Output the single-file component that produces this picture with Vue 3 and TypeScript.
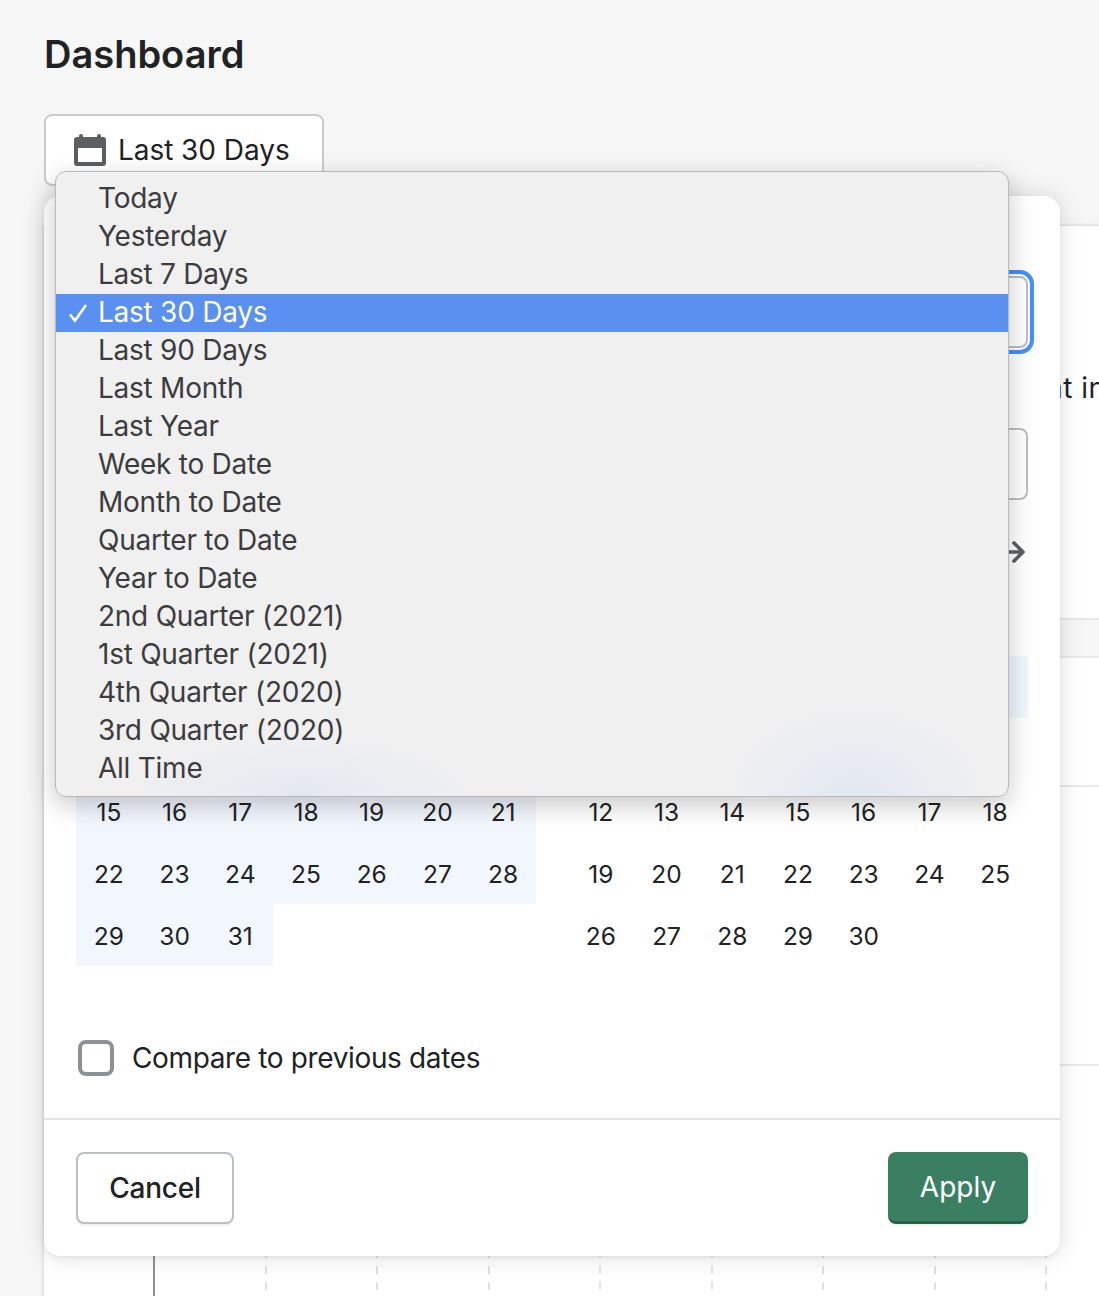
<script setup lang="ts">
const options: string[] = [
  'Today', 'Yesterday', 'Last 7 Days', 'Last 30 Days', 'Last 90 Days', 'Last Month', 'Last Year',
  'Week to Date', 'Month to Date', 'Quarter to Date', 'Year to Date', '2nd Quarter (2021)',
  '1st Quarter (2021)', '4th Quarter (2020)', '3rd Quarter (2020)', 'All Time',
]
const selected = 'Last 30 Days'
const weekdays = ['Su', 'Mo', 'Tu', 'We', 'Th', 'Fr', 'Sa']

interface Cell { day: number | null; on: boolean }
function month(offset: number, length: number, onUntil: number): Cell[] {
  const cells: Cell[] = []
  for (let i = 0; i < offset; i++) cells.push({ day: null, on: false })
  for (let d = 1; d <= length; d++) cells.push({ day: d, on: d <= onUntil })
  return cells
}
const months = [
  { name: 'august', cells: month(0, 31, 31) },
  { name: 'september', cells: month(3, 30, 4) },
]
const ticks = [1, 2, 3, 4, 5, 6, 7, 8]
</script>

<template>
  <div class="page">
    <h1 class="title">Dashboard</h1>

    <button class="range-btn" type="button">
      <svg class="cal" viewBox="0 0 32 32" aria-hidden="true">
        <path fill="#5c5f62" fill-rule="evenodd" d="M7 0a2 2 0 0 1 2 2v1h14V2a2 2 0 0 1 4 0v1h2a3 3 0 0 1 3 3v23a3 3 0 0 1-3 3H3a3 3 0 0 1-3-3V6a3 3 0 0 1 3-3h2V2a2 2 0 0 1 2-2zM4 14v14h24V14H4z" />
      </svg>
      <span>Last 30 Days</span>
    </button>

    <section class="report">
      <p class="report-text">at insights</p>
      <div class="report-band"></div>
      <div class="report-row"></div>
      <div class="report-row tall"></div>
      <div class="chart">
        <div v-for="t in ticks" :key="t" class="tick"></div>
      </div>
    </section>

    <div class="popover">
      <div class="pop-body">
        <label class="lbl">Date range</label>
        <div class="input focused"></div>
        <div class="date-fields">
          <div class="date-field"><label class="lbl">Starting</label><div class="input"></div></div>
          <div class="date-field"><label class="lbl">Ending</label><div class="input"></div></div>
        </div>
        <div class="nav">
          <svg class="arrow" viewBox="0 0 18 24" aria-hidden="true">
            <path d="M1 12h14M6 3l9 9-9 9" fill="none" stroke="#5c5f62" stroke-width="3.6" stroke-linecap="round" stroke-linejoin="round" />
          </svg>
        </div>
        <div class="months">
          <div v-for="m in months" :key="m.name" class="month">
            <div v-for="w in weekdays" :key="w" class="cell wd">{{ w }}</div>
            <div v-for="(c, i) in m.cells" :key="i" class="cell" :class="{ on: c.on }">{{ c.day }}</div>
          </div>
        </div>
        <label class="compare">
          <span class="box"></span>
          <span>Compare to previous dates</span>
        </label>
      </div>
      <footer class="pop-foot">
        <button class="btn" type="button">Cancel</button>
        <button class="btn primary" type="button">Apply</button>
      </footer>
    </div>

    <ul class="menu">
      <li v-for="o in options" :key="o" class="item" :class="{ sel: o === selected }">
        <span class="check">
          <svg v-if="o === selected" viewBox="0 0 20 20" aria-hidden="true">
            <path d="M2 11.5l5 6L18 2" fill="none" stroke="#fff" stroke-width="2.6" />
          </svg>
        </span>
        <span class="item-text">{{ o }}</span>
      </li>
    </ul>
  </div>
</template>

<style>
html, body { margin: 0; background: #f6f6f7; }
</style>

<style scoped>
.page {
  position: relative;
  width: 1099px;
  height: 1296px;
  overflow: hidden;
  box-sizing: border-box;
  padding: 0 0 0 44px;
  background: #f6f6f7;
  font-family: Inter, "Liberation Sans", sans-serif;
  color: #202223;
}
.title {
  margin: 0;
  padding: 31px 0 0;
  height: 114px;
  box-sizing: border-box;
  font-size: 38px;
  line-height: 46px;
  font-weight: 600;
}
.range-btn {
  display: flex;
  align-items: center;
  gap: 12px;
  box-sizing: border-box;
  width: 280px;
  height: 72px;
  padding: 0 0 0 28px;
  background: #fff;
  border: 2px solid #c9cccf;
  border-radius: 8px;
  font: inherit;
  font-size: 28px;
  letter-spacing: -0.05px;
  color: #202223;
}
.cal { width: 32px; height: 32px; flex: none; }

.report {
  margin-top: 40px;
  width: 1100px;
  height: 1080px;
  background: #fff;
  box-shadow: 0 0 4px rgba(23, 24, 24, .2);
}
.report-text {
  margin: 0;
  height: 392px;
  box-sizing: border-box;
  padding: 144px 0 0 1003px;
  font-size: 28px;
  line-height: 36px;
  letter-spacing: .5px;
  white-space: nowrap;
}
.report-band {
  height: 40px;
  box-sizing: border-box;
  background: #f6f6f7;
  border-top: 2px solid #e9e9ea;
  border-bottom: 2px solid #e9e9ea;
}
.report-row { height: 127px; border-bottom: 2px solid #e9e9ea; }
.report-row.tall { height: 277px; }
.chart {
  display: flex;
  margin-left: 109px;
  height: 240px;
  border-left: 2px solid #8c9196;
}
.tick {
  flex: none;
  width: 111.5px;
  box-sizing: border-box;
  background: repeating-linear-gradient(to bottom, #e1e3e5 0 8px, transparent 8px 16px) right 8px / 2px 100% no-repeat;
}

.popover {
  position: absolute;
  left: 44px;
  top: 196px;
  width: 1016px;
  height: 1060px;
  display: flex;
  flex-direction: column;
  background: #fff;
  border-radius: 16px;
  box-shadow: 0 0 24px rgba(23, 24, 24, .14), 0 2px 4px rgba(23, 24, 24, .06);
}
.pop-body {
  flex: 1;
  padding: 32px 32px 0;
  border-bottom: 2px solid #e1e3e5;
}
.lbl { display: block; height: 48px; font-size: 28px; line-height: 36px; }
.input {
  box-sizing: border-box;
  height: 72px;
  border: 2px solid #babfc3;
  border-radius: 8px;
}
.input.focused { outline: 4px solid #458fff; outline-offset: 2px; }
.date-fields { display: flex; gap: 32px; margin-top: 32px; }
.date-field { flex: 1; }
.nav { display: flex; justify-content: flex-end; align-items: center; height: 40px; margin-top: 32px; }
.arrow { width: 18px; height: 24px; margin-right: 2px; }
.months { display: flex; gap: 32px; margin-top: 22px; height: 372px; }
.month { flex: 1; display: grid; grid-template-columns: repeat(7, 1fr); grid-auto-rows: 62px; align-content: start; }
.cell {
  display: flex;
  align-items: center;
  justify-content: center;
  padding-top: 2px;
  box-sizing: border-box;
  font-size: 24.5px;
  color: #202223;
}
.cell.on { background: #f2f6fd; }
.wd { color: #6d7175; }
.compare {
  display: flex;
  align-items: center;
  gap: 18px;
  margin: 74px 0 0 2px;
  font-size: 28px;
  line-height: 36px;
  letter-spacing: -0.36px;
}
.box {
  width: 36px;
  height: 36px;
  box-sizing: border-box;
  border: 4px solid #8c9196;
  border-radius: 8px;
}
.pop-foot {
  display: flex;
  justify-content: space-between;
  padding: 32px;
}
.btn {
  box-sizing: border-box;
  width: 158px;
  height: 72px;
  background: #fff;
  border: 2px solid #babfc3;
  border-radius: 8px;
  box-shadow: 0 2px 0 rgba(0, 0, 0, .05);
  font: inherit;
  font-size: 28px;
  font-weight: 500;
  letter-spacing: -0.2px;
  color: #202223;
}
.btn.primary {
  width: 140px;
  background: #3b7f63;
  border: 0;
  border-bottom: 3px solid #2a5f49;
  color: #fff;
  font-weight: 400;
  letter-spacing: 0;
}

.menu {
  position: absolute;
  left: 55px;
  top: 171px;
  width: 954px;
  height: 626px;
  box-sizing: border-box;
  margin: 0;
  padding: 8px 0;
  list-style: none;
  border: 1px solid #b9b9bb;
  border-radius: 11px;
  background:
    radial-gradient(130px 90px at 84% 100%, #e2e7f1, rgba(226, 231, 241, 0)),
    radial-gradient(170px 60px at 26% 100%, #e4e8f0, rgba(228, 232, 240, 0)),
    linear-gradient(#f0f0f1, #f0f0f1);
  box-shadow: 0 8px 26px rgba(0, 0, 0, .22);
  font-size: 28px;
  line-height: 37px;
  letter-spacing: -0.25px;
  color: #3c3c3e;
  overflow: hidden;
}
.item { display: flex; height: 38px; align-items: flex-start; white-space: nowrap; }
.item-text { margin-left: -1px; }
.check { flex: none; width: 43px; height: 38px; display: flex; justify-content: flex-end; align-items: center; }
.check svg { width: 20px; height: 20px; margin-right: 11px; }
.item.sel { background: #5a90f0; color: #fff; }
</style>
